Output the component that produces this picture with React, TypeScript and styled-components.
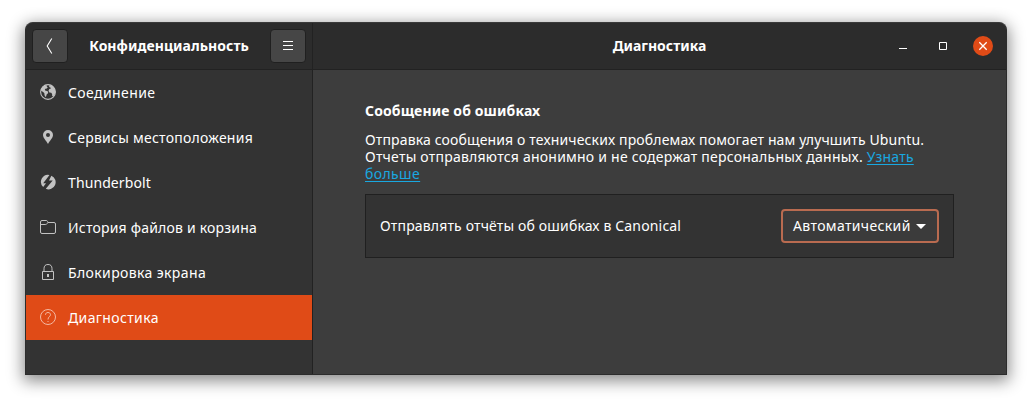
import React from "react";
import styled, { createGlobalStyle } from "styled-components";

const GlobalStyle = createGlobalStyle`
  * { box-sizing: border-box; }
  body {
    margin: 0;
    background: #fff;
    color: #fff;
    font-family: "Noto Sans", "Open Sans", sans-serif;
    font-size: 14px;
    overflow: hidden;
  }
`;

const Desktop = styled.div`
  height: 403px;
  padding: 22px 25px 28px;
`;

const Window = styled.main`
  width: 982px;
  height: 353px;
  display: grid;
  grid-template-columns: 287px 1fr;
  grid-template-rows: 47px 1fr;
  border: 1px solid #2c2c2c;
  border-top-color: #3a3a3a;
  border-radius: 8px 8px 0 0;
  overflow: hidden;
  background: #3d3d3d;
  box-shadow: 0 4px 16px 2px rgba(0, 0, 0, 0.46);
`;

const SideHeader = styled.header`
  display: flex;
  align-items: center;
  justify-content: space-between;
  padding: 0 6px;
  background: #2c2c2c;
  border-right: 1px solid #222;
  border-bottom: 1px solid #222;
`;

const MainHeader = styled.header`
  display: grid;
  grid-template-columns: 1fr auto 1fr;
  align-items: center;
  background: #2c2c2c;
  border-bottom: 1px solid #222;
`;

const HeaderButton = styled.button`
  width: 36px;
  height: 34px;
  padding: 0;
  display: flex;
  align-items: center;
  justify-content: center;
  color: #fff;
  background: #464646;
  border: 1px solid #202020;
  border-radius: 4px;
`;

const Text = styled.span<{ $spacing?: number }>`
  letter-spacing: ${(p) => p.$spacing ?? 0}px;
  white-space: nowrap;
`;

const Title = styled(Text)`
  font-weight: 700;
  line-height: 20px;
`;

const WindowControls = styled.div`
  display: flex;
  align-items: center;
  justify-content: flex-end;
  gap: 20px;
  padding-right: 13px;
`;

const Control = styled.span<{ $close?: boolean }>`
  width: 20px;
  height: 20px;
  display: flex;
  border-radius: 50%;
  background: ${(p) => (p.$close ? "#e04b17" : "transparent")};
`;

const Sidebar = styled.nav`
  background: #333;
  border-right: 1px solid #222;
`;

const NavRow = styled.div<{ $active?: boolean }>`
  height: 45px;
  display: flex;
  align-items: center;
  gap: 12px;
  padding-left: 14px;
  line-height: 20px;
  background: ${(p) => (p.$active ? "#e04b17" : "transparent")};

  svg {
    flex: none;
    margin-bottom: 1px;
    color: ${(p) => (p.$active ? "#f4b8a2" : "#c2c2c2")};
  }
`;

const Content = styled.section`
  padding: 31px 52px 0;
`;

const Heading = styled.h2`
  margin: 0 0 10px;
  font-size: 14px;
  font-weight: 700;
  line-height: 20px;
`;

const Description = styled.p`
  margin: 0;
  line-height: 17px;
`;

const Link = styled.a`
  color: #19a8e0;
  text-decoration: underline;
  text-decoration-thickness: 1px;
  text-underline-offset: 2px;
`;

const SettingRow = styled.div`
  width: 589px;
  height: 64px;
  margin-top: 12px;
  padding: 0 14px;
  display: flex;
  align-items: center;
  justify-content: space-between;
  line-height: 18px;
  background: #333;
  border: 1px solid #202020;
`;

const Select = styled.button`
  width: 158px;
  height: 34px;
  padding: 0 11px 0 10px;
  display: flex;
  align-items: center;
  justify-content: space-between;
  color: #fff;
  font: inherit;
  background: #3b3b3b;
  border: 2px solid #b96b50;
  border-radius: 4px;
`;

const GlobeIcon = () => (
  <svg width="16" height="16" viewBox="0 0 16 16" fill="none">
    <circle cx="8" cy="8" r="7.4" stroke="currentColor" strokeWidth="1.1" />
    <path
      fill="currentColor"
      d="M1 5.5 2.6 2.8 5 1.2l2 .2-.3 1.2 1 .6-.8 1.2-1.6.4-.5 1.3.9.6 1.6.3.9 1-.4 1.5-1.2.9-.4 1.8-.9.9-.8-2.2-.2-1.9-1.6-1.3L1 6.500zM9.500 1l2.700.5L14.500 4l.9 3.500-.6 3-1.500 2-1.100-.5-.1-2-.9-1.300-1.900-.3-.8-1.700.8-1.600 1.600-.6-.5-1.100-1.300-.4z"
    />
  </svg>
);

const PinIcon = () => (
  <svg width="16" height="16" viewBox="0 0 16 16">
    <path
      fill="currentColor"
      fillRule="evenodd"
      d="M8 1a5 5 0 0 0-5 5c0 3 3.2 5.500 5 9 1.800-3.500 5-6 5-9a5 5 0 0 0-5-5m0 3a2 2 0 1 1 0 4 2 2 0 0 1 0-4"
    />
  </svg>
);

const ThunderboltIcon = () => (
  <svg width="16" height="16" viewBox="0 0 16 16" fill="currentColor">
    <path d="M9.500.9A7.100 7.100 0 0 0 3.200 13L6 9.200H3.200z" />
    <path d="M11.300 1.700 9 6.500h3.700L5.800 14.800A7.100 7.100 0 0 0 11.300 1.700" />
    <path d="M9.800 2.600 5.400 8h2.400l-2.200 4L10.500 7.400H7.800z" fill="#333" />
  </svg>
);

const FolderIcon = () => (
  <svg width="16" height="16" viewBox="0 0 16 16" fill="none" stroke="currentColor">
    <path d="M.5 3q0-1.500 1.500-1.500h4.400q.7 0 1.100.9l.4 1.100H14q1.500 0 1.500 1.500v8q0 1.500-1.500 1.500H2Q.5 14.500.5 13zM.5 5.500h5.200q.8 0 1.300-.8l.9-1.200" />
  </svg>
);

const LockIcon = () => (
  <svg width="16" height="16" viewBox="0 0 16 16" fill="none" stroke="currentColor">
    <path d="M2.500 7.500h11v8h-11zM4 7.500V4.700a4 4.200 0 0 1 8 0v2.800" />
    <path d="M7 10h2v3H7z" fill="currentColor" stroke="none" />
  </svg>
);

const QuestionIcon = () => (
  <svg width="16" height="16" viewBox="0 0 16 16" fill="none" stroke="currentColor">
    <circle cx="8" cy="8" r="7.500" />
    <path d="M5.500 5.800c0-1.500 1-2.300 2.500-2.300s2.500.9 2.500 2.200C10.500 7.700 8 7.600 8 10.500" />
    <path d="M7.500 12h1v1h-1z" fill="currentColor" stroke="none" />
  </svg>
);

const items = [
  { label: "Соединение", Icon: GlobeIcon, spacing: 0.4 },
  { label: "Сервисы местоположения", Icon: PinIcon, spacing: 0.25 },
  { label: "Thunderbolt", Icon: ThunderboltIcon, spacing: 0.1 },
  { label: "История файлов и корзина", Icon: FolderIcon, spacing: 0.2 },
  { label: "Блокировка экрана", Icon: LockIcon, spacing: 0.38 },
  { label: "Диагностика", Icon: QuestionIcon, spacing: 0.37, active: true },
];

export default function App() {
  return (
    <>
      <GlobalStyle />
      <Desktop>
        <Window>
          <SideHeader>
            <HeaderButton aria-label="Назад">
              <svg width="16" height="16" viewBox="0 0 16 16" fill="none" stroke="currentColor" strokeWidth="1.1">
                <path d="M9.800.5 5.200 8l4.600 7.500" />
              </svg>
            </HeaderButton>
            <Title $spacing={0.05}>Конфиденциальность</Title>
            <HeaderButton aria-label="Меню">
              <svg width="10" height="10" viewBox="0 0 10 10" stroke="currentColor">
                <path d="M0 .5h10M0 4.500h10M0 8.500h10" />
              </svg>
            </HeaderButton>
          </SideHeader>
          <MainHeader>
            <span />
            <Title>Диагностика</Title>
            <WindowControls>
              <Control>
                <svg width="20" height="20" fill="none" stroke="#fff">
                  <path d="M6 12.500h8" />
                </svg>
              </Control>
              <Control>
                <svg width="20" height="20" fill="none" stroke="#fff">
                  <path d="M6.500 6.500h7v7h-7z" />
                </svg>
              </Control>
              <Control $close>
                <svg width="20" height="20" fill="none" stroke="#fff" strokeWidth="1.3">
                  <path d="m6.300 6.300 7.400 7.400m0-7.400-7.400 7.400" />
                </svg>
              </Control>
            </WindowControls>
          </MainHeader>
          <Sidebar>
            {items.map(({ label, Icon, spacing, active }) => (
              <NavRow key={label} $active={active}>
                <Icon />
                <Text $spacing={spacing}>{label}</Text>
              </NavRow>
            ))}
          </Sidebar>
          <Content>
            <Heading>
              <Text $spacing={0.12}>Сообщение об ошибках</Text>
            </Heading>
            <Description>
              <Text $spacing={0.14}>Отправка сообщения о технических проблемах помогает нам улучшить Ubuntu.</Text>
              <br />
              <Text $spacing={0.23}>
                Отчеты отправляются анонимно и не содержат персональных данных. <Link>Узнать</Link>
              </Text>
              <br />
              <Text $spacing={0.4}>
                <Link>больше</Link>
              </Text>
            </Description>
            <SettingRow>
              <Text $spacing={0.16}>Отправлять отчёты об ошибках в Canonical</Text>
              <Select>
                <Text $spacing={0.36}>Автоматический</Text>
                <svg width="10" height="5" viewBox="0 0 10 5" fill="currentColor">
                  <path d="M0 0h10L5 5z" />
                </svg>
              </Select>
            </SettingRow>
          </Content>
        </Window>
      </Desktop>
    </>
  );
}
